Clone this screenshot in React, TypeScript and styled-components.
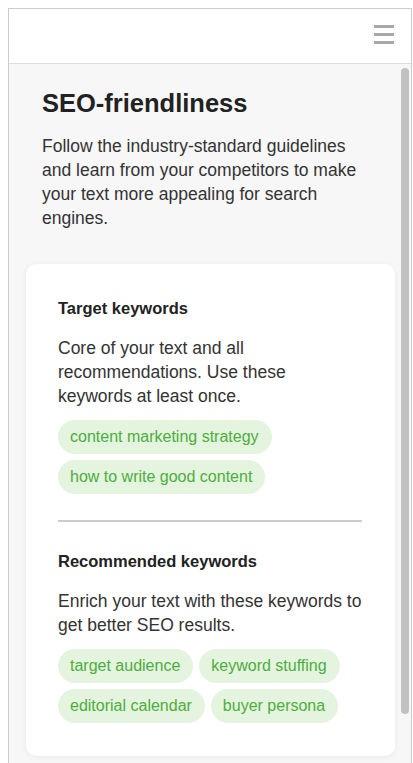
import React from 'react';
import styled, { createGlobalStyle } from 'styled-components';

const GlobalStyle = createGlobalStyle`
  *, *::before, *::after {
    box-sizing: border-box;
  }

  html, body {
    margin: 0;
    padding: 0;
    overflow: hidden;
    background: #ffffff;
  }

  body {
    padding: 8px 1px 0 8px;
    font-family: 'Liberation Sans', Arial, sans-serif;
    color: #222222;
  }
`;

interface Section {
  title: string;
  text: string;
  keywords: string[];
}

const sections: Section[] = [
  {
    title: 'Target keywords',
    text: 'Core of your text and all recommendations. Use these keywords at least once.',
    keywords: ['content marketing strategy', 'how to write good content']
  },
  {
    title: 'Recommended keywords',
    text: 'Enrich your text with these keywords to get better SEO results.',
    keywords: ['target audience', 'keyword stuffing', 'editorial calendar', 'buyer persona']
  }
];

const App = () => (
  <>
    <GlobalStyle />
    <Frame>
      <Header>
        <MenuButton aria-label='Menu'>
          <MenuBar />
          <MenuBar />
          <MenuBar />
        </MenuButton>
      </Header>
      <Body>
        <Main>
          <Intro>
            <Title>SEO-friendliness</Title>
            <Lead>
              Follow the industry-standard guidelines and learn from your competitors to make your text more
              appealing for search engines.
            </Lead>
          </Intro>
          <Card>
            {sections.map((section, i) => (
              <React.Fragment key={section.title}>
                {i > 0 && <Divider />}
                <Block>
                  <BlockTitle>{section.title}</BlockTitle>
                  <BlockText>{section.text}</BlockText>
                  <Chips>
                    {section.keywords.map(k => (
                      <Chip key={k}>{k}</Chip>
                    ))}
                  </Chips>
                </Block>
              </React.Fragment>
            ))}
          </Card>
        </Main>
        <Track>
          <Thumb />
        </Track>
      </Body>
    </Frame>
  </>
);

const Frame = styled.div`
  height: 800px;
  border: 1px solid #cccccc;
  border-bottom: 0;
  display: flex;
  flex-direction: column;
  overflow: hidden;
`;

const Header = styled.header`
  flex: 0 0 auto;
  height: 55px;
  display: flex;
  align-items: center;
  justify-content: flex-end;
  padding: 0 17px 4px 0;
  background: #ffffff;
  border-bottom: 1px solid #dddddd;
`;

const MenuButton = styled.button`
  display: flex;
  flex-direction: column;
  gap: 5px;
  width: 20px;
  padding: 0;
  border: 0;
  background: none;
  cursor: pointer;
`;

const MenuBar = styled.span`
  display: block;
  height: 3px;
  background: #a9a9a9;
`;

const Body = styled.div`
  flex: 1 1 auto;
  display: flex;
  background: #f7f7f7;
`;

const Main = styled.main`
  flex: 1 1 auto;
  padding: 0 4px 0 17px;
`;

const Intro = styled.div`
  padding: 24px 24px 34px 16px;
`;

const Title = styled.h1`
  margin: 0 0 16px;
  font-size: 25.5px;
  line-height: 30px;
  font-weight: bold;
  color: #222222;
`;

const Lead = styled.p`
  margin: 0;
  font-size: 17.5px;
  line-height: 24px;
  color: #333333;
`;

const Card = styled.section`
  background: #ffffff;
  border-radius: 10px;
  box-shadow: 0 1px 6px rgba(0, 0, 0, 0.06);
  padding: 33px 33px 33px 32px;
`;

const Block = styled.div`
  display: flex;
  flex-direction: column;
`;

const BlockTitle = styled.h3`
  margin: 0 0 17px;
  font-size: 16.5px;
  line-height: 22px;
  font-weight: bold;
  color: #222222;
`;

const BlockText = styled.p`
  margin: 0 0 12px;
  font-size: 17.5px;
  line-height: 24px;
  color: #333333;
`;

const Chips = styled.div`
  display: flex;
  flex-wrap: wrap;
  gap: 6px;
`;

const Chip = styled.span`
  display: inline-flex;
  align-items: center;
  height: 34px;
  padding: 0 13px 0 12px;
  border-radius: 17px;
  background: #e4f4df;
  color: #4cae3c;
  font-size: 16px;
`;

const Divider = styled.hr`
  margin: 26px 0 28px;
  border: 0;
  height: 2px;
  background: #cccccc;
`;

const Track = styled.div`
  flex: 0 0 12px;
  padding: 4px 2px 0;
`;

const Thumb = styled.div`
  height: 646px;
  border-radius: 4px;
  background: #c1c1c1;
`;

export default App;
